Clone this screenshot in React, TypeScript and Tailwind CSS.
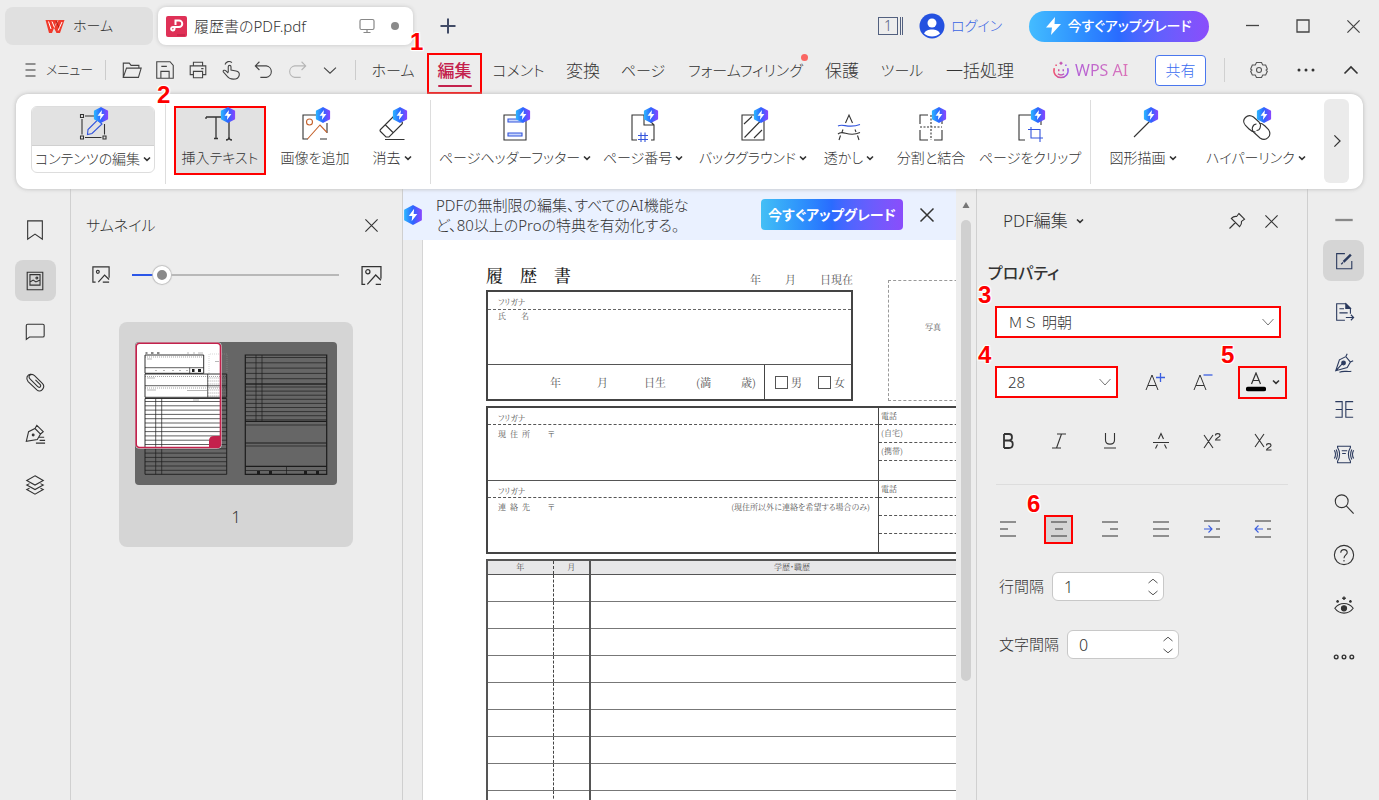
import { useState } from "react";
import type { ReactNode } from "react";
import clsx from "clsx";

type IconProps = { size?: number; box?: number; sw?: number; className?: string; children: ReactNode };

const Svg = ({ size = 24, box = 24, sw = 1, className, children }: IconProps) => (
  <svg width={size} height={size} viewBox={`0 0 ${box} ${box}`} fill="none" stroke="currentColor" strokeWidth={sw}
    className={clsx("shrink-0", className)} aria-hidden="true">
    {children}
  </svg>
);

// Premium hexagon with the lightning bolt
const Hex = ({ size = 16, className }: { size?: number; className?: string }) => (
  <svg width={size} height={size} viewBox="0 0 16 16" className={clsx("shrink-0", className)} aria-hidden="true">
    <path d="M8 0.8 14.4 4.2V11.8L8 15.2 1.6 11.8V4.2Z" fill="url(#pro)" stroke="url(#pro)" strokeWidth="1.4" strokeLinejoin="round" />
    <path d="M8.9 3 4.6 8.8H7.4L6.9 13 11.4 7.1H8.5Z" fill="#fff" />
  </svg>
);

const Caret = ({ size = 8 }: { size?: number }) => (
  <Svg size={size} box={8} sw={1.6}><path d="M1 2.5 4 5.3 7 2.5" /></Svg>
);

const Cross = ({ size = 16, sw = 1.2 }: { size?: number; sw?: number }) => (
  <Svg size={size} box={16} sw={sw}><path d="M1.5 1.5 14.5 14.5M14.5 1.5 1.5 14.5" /></Svg>
);

const Step = ({ n }: { n: number }) => (
  <span className="absolute -left-[19px] -top-[27px] z-20 font-['Liberation_Sans',sans-serif] text-2xl leading-7 font-bold text-[#fe0000] [text-shadow:1px_1px_1px_#fff,-1px_-1px_1px_#fff,1px_-1px_1px_#fff,-1px_1px_1px_#fff]">
    {n}
  </span>
);

const quickActions = [
  { label: "開く", icon: <path d="M2.5 20V4.5H9L11 7H19.5V10M2.5 20 6 10H22L19 20Z" /> },
  { label: "保存", icon: <path d="M3 21V3H17.5L21 7V21ZM7.5 21V13.5H16.5V21M8 8H14" /> },
  { label: "印刷", icon: <path d="M7 7.5V3.5H17V7.5M7 17H3.5V7.5H20.5V17H17M7 13.5H17V20.5H7ZM15.5 10.5H18" /> },
  { label: "ハンド", icon: <path d="M5.5 6A4.500 4.500 0 0 1 13 4M9 14.5V8.5C9 6.5 12 6.5 12 8.5V12L17.5 13C20 13.5 21.500 15 21 17.5 20.500 20.5 18.500 22 14.5 22 11 22 9 20.5 7.5 18.5L3.500 14C3 12.5 5 11.500 6.5 13L9 15.5" /> },
  { label: "元に戻す", icon: <path d="M7 3 2.5 7.5 7 12M2.5 7.5H14.5A6.3 6.3 0 0 1 14.5 20H8" /> },
  { label: "やり直し", dim: true, icon: <path d="M17 3 21.5 7.5 17 12M21.5 7.5H9.5A6.3 6.3 0 0 0 9.5 20H16" /> },
  { label: "その他", icon: <path d="M5.500 9.500 12 15.500 18.500 9.500" /> },
];

const menuTabs = [
  { label: "ホーム", w: "w-[68px]" },
  { label: "編集", w: "w-[55px]", kanji: true },
  { label: "コメント", w: "w-[73px]" },
  { label: "変換", w: "w-[56px]", kanji: true },
  { label: "ページ", w: "w-[64px]" },
  { label: "フォームフィリング", w: "w-[141px]", dot: true },
  { label: "保護", w: "w-[52px]", kanji: true },
  { label: "ツール", w: "w-[68px]" },
  { label: "一括処理", w: "w-[88px]", kanji: true },
];

type Tool = { label: string; w: string; caret?: boolean; free?: boolean; icon: ReactNode };

const insertTools: Tool[] = [
  { label: "画像を追加", w: "w-[98px]", icon: (
    <><path d="M19 3H3V27H8M27 11V21M20 27H27" /><g stroke="#c4622d"><circle cx="9.5" cy="10" r="3" /><path d="M7.5 27 20 13 27 20.5" /></g></>
  ) },
  { label: "消去", w: "w-[56px]", caret: true, icon: (
    <path d="M16.500 4.500 3.500 17.500Q2.500 18.500 3.500 19.500L9 25H12L25 12Q26 11 25 10L19.500 4.500Q18 3 16.500 4.500ZM8.500 13 16 20.500M8 27.500H27.500" />
  ) },
];

const pageTools: Tool[] = [
  { label: "ページヘッダーフッター", w: "w-[168px]", caret: true, icon: (
    <><path d="M4 3H26V28H4Z" /><path d="M8 7H22V10H8ZM8 21H22V24H8Z" stroke="#3355dd" fill="#c9d6fb" /></>
  ) },
  { label: "ページ番号", w: "w-[88px]", caret: true, icon: (
    <><path d="M9 28H4V3H16V13H26V28H23M16 3 26 13" /><path d="M10 23.500H20M10 27.500H20M13 20.500V30M17 20.500V30" stroke="#3355dd" /></>
  ) },
  { label: "バックグラウンド", w: "w-[132px]", caret: true, icon: (
    <path d="M4 3H26V28H4ZM6 12 14 4.500M6.500 25.500 24 7.500M16 26 24 18" />
  ) },
  { label: "透かし", w: "w-[60px]", caret: true, free: true, icon: (
    <><path d="M11.500 11 15 3 18.500 11M9 17.500 8 20M6.500 23.500 5 28M21 17.500 22 20M23.500 23.500 25 28M4 22C9 17 14 26 26 20.500" /><path d="M4 14C9 11 14 17 26 12.500" stroke="#3355dd" /></>
  ) },
  { label: "分割と結合", w: "w-[104px]", icon: (
    <><path d="M12 3H4V12M4 18V28H12M18 28H26V18M26 12V3H18" /><path d="M15 3V28M4 15H26" strokeDasharray="2 1.500" /></>
  ) },
  { label: "ページをクリップ", w: "w-[94px]", icon: (
    <><path d="M20 3H4V28H10M26 9V13" /><path d="M16 15V26H28M13 17.500H25V30" stroke="#3355dd" /></>
  ) },
];

const drawTools: Tool[] = [
  { label: "図形描画", w: "w-[104px]", caret: true, icon: <path d="M6 25 22 9" /> },
  { label: "ハイパーリンク", w: "w-[122px]", caret: true, icon: (
    <><path d="M14.500 20C12 20 10 19 8 17L4.500 13.500C-.500 7.500 6.500 1 12.500 5L18 10C21 13.500 19 18.500 15.500 18.500" /><path d="M18 11C20.500 11 22 12 24 14L27.500 17.500C31.500 24 25 30 19 26L13 20.500C9.500 17 12 12 15.500 12" /></>
  ) },
];

const leftRail = [
  { label: "しおり", icon: <path d="M4 2H20V22L12 16.500 4 22Z" /> },
  { label: "サムネイル", icon: <path d="M3.500 2.500H20.500V21.500H3.500ZM6.500 5H17.500V16.500H6.500ZM6.500 13 10 11 13 13 17.500 11M14 7.800A1 1 0 1 0 14.100 7.800" /> },
  { label: "コメント", icon: <path d="M2.500 20V5Q2.500 3.500 4 3.500H20.500Q22 3.500 22 5V16Q22 17.500 20.500 17.500H6Z" /> },
  { label: "添付", icon: <path d="M12.500 8.500 17.500 13.500C19.500 15.500 17 18 15 16L6.500 7.500C3.500 4.500 8 .500 11.500 4L20 12.500C24 16.500 18.500 23.500 14 19.500L4.500 10.500C1.500 7 3.500 2.500 7.500 2.200" /> },
  { label: "署名", icon: <><path d="M2.500 20 5 9.500 12 6 18 12 14.500 18 2.500 20ZM12 6 14 2.500 21 9.500 18 12M16 15.500H22M17 19H23M13 22H23" /><circle cx="10" cy="13" r="1" fill="currentColor" /></> },
  { label: "レイヤー", icon: <path d="M12 2 21 7 12 12 3 7ZM6 10.500 3 12 12 17 21 12 18 10.500M6 15.500 3 17 12 22 21 17 18 15.500" /> },
];

const railA = [
  { label: "編集", icon: <><path d="M13 4H4V20.500H20.500V12" /><path d="M11.500 13 19.500 5" strokeWidth="2.600" /><path d="M9 15.500 11 13.500" strokeWidth="1.500" /></> },
  { label: "変換", icon: <><path d="M13 21H4V3H14L19 8V14M7 8.500H12M7 13H16M14 18H22M19.500 15 22.500 18 19.500 21" /><path d="M14 3V8H19Z" fill="currentColor" /></> },
  { label: "署名", icon: <><path d="M3 20.500 7 8.500 14 5 19 11 15.500 17ZM14 5 15.500 2M19 11 22 9.500M3 20.500 10 13M7 22C12 20 16 22 20 21" /><circle cx="11.500" cy="12" r="2" fill="currentColor" /></> },
];
const railB = [
  { label: "比較", icon: <path d="M2.500 4H10V21H2.500M3 12.500H10M22 4H14V21H22M21.500 12.500H14" /> },
  { label: "圧縮", icon: <path d="M5 3.500H19V5C16 10 16 15 19 20V21.500H5V20C8 15 8 10 5 5ZM9.500 8.500H15.500M10 11.500H14M1.500 8Q4 12.500 1.500 17M3.500 7Q6 12.500 3.500 18M22.500 8Q20 12.500 22.500 17M20.500 7Q18 12.500 20.500 18" /> },
];
const railC = [
  { label: "検索", icon: <><circle cx="9.500" cy="9" r="7" /><path d="M14.500 14 22.500 22.500" /></> },
  { label: "ヘルプ", icon: <><circle cx="12" cy="12" r="10.500" /><path d="M8.500 9.500C8.500 5 15.500 5 15.500 9.500 15.500 12 12 12 12 15.500M12 17.500V19" /></> },
  { label: "目の保護", icon: <><path d="M2 14.500C7 7.500 17 7.500 22 14.500 17 21.500 7 21.500 2 14.500Z" /><circle cx="12" cy="14.500" r="2.800" fill="currentColor" /><path d="M12 1.500V5.500M10 3.500H14M3.500 7H6.500M5 5.500V8.500M17.500 7H20.500M19 5.500V8.500" strokeWidth="1.600" /></> },
  { label: "もっと", icon: <g strokeWidth="1.500"><circle cx="3.500" cy="12" r="2" /><circle cx="12" cy="12" r="2" /><circle cx="20.500" cy="12" r="2" /></g> },
];

const styleButtons = [
  { label: "太字", icon: <path d="M8 5V19M8 5H13C17 5 17 11.500 13 11.500H8M13 11.500C18 11.500 18 19 13 19H8" strokeWidth="1.800" /> },
  { label: "斜体", icon: <path d="M10 5H19M5 19H14M14.500 5 9.500 19" /> },
  { label: "下線", icon: <path d="M7.500 4V11C7.500 16.500 16.500 16.500 16.500 11V4M6 19H18" /> },
  { label: "取り消し線", icon: <path d="M9.500 10 12 4.500 14.500 10M4 13.500H20M8.500 15.500 6.500 19.500M15.500 15.500 17.500 19.500" /> },
  { label: "上付き", icon: <path d="M4 6 13 19M13 6 4 19M15.500 6.500C15.500 4 20 4 20 6.500 20 8.500 15.500 9 15.500 11H20.500" /> },
  { label: "下付き", icon: <path d="M4 5 13 18M13 5 4 18M15.500 16.500C15.500 14 20 14 20 16.500 20 18.500 15.500 19 15.500 21H20.500" /> },
];

const alignButtons = [
  { label: "左揃え", icon: <path d="M4 5H20M4 12H12M4 19H20" /> },
  { label: "中央揃え", icon: <path d="M4 5H20M8 12H16M4 19H20" /> },
  { label: "右揃え", icon: <path d="M4 5H20M12 12H20M4 19H20" /> },
  { label: "両端揃え", icon: <path d="M4 5H20M4 12H20M4 19H20" /> },
  { label: "インデント", icon: <><path d="M4 4H20M16 12H20M4 20H20" /><path d="M4 12H12M8.500 8.500 12 12 8.500 15.500" stroke="#3b5fe0" /></> },
  { label: "インデント解除", icon: <><path d="M4 4H20M16 12H20M4 20H20" /><path d="M12 12H4M7.500 8.500 4 12 7.500 15.500" stroke="#3b5fe0" /></> },
];

function ToolButton({ tool }: { tool: Tool }) {
  return (
    <button className={clsx("flex h-[68px] shrink-0 flex-col items-center whitespace-nowrap", tool.w)}>
      <span className="relative mt-1.5 mb-1.5">
        <Svg size={30} box={30} sw={1.1}>{tool.icon}</Svg>
        {!tool.free && <Hex className="absolute -top-[5px] left-[15px]" />}
      </span>
      <span className="flex items-center gap-[3px] text-sm leading-5">{tool.label}{tool.caret && <Caret />}</span>
    </button>
  );
}

function RailButton({ label, active, h = "h-[41px]", children }: { label: string; active?: boolean; h?: string; children: ReactNode }) {
  return (
    <button aria-label={label} className={clsx("flex w-[41px] items-center justify-center rounded-lg", h, active && "bg-[#d5d5d5]")}>
      <Svg size={22} sw={1.2}>{children}</Svg>
    </button>
  );
}

function TitleBar() {
  return (
    <header className="flex h-[46px] shrink-0 items-center pt-1.5 pl-[5px]">
      <button className="flex h-[38px] w-[148px] items-center justify-center gap-2 rounded-lg bg-[#e0e0e0] text-sm">
        <svg width="20" height="15" viewBox="0 0 20 15" fill="none" aria-hidden="true">
          <path d="M.5 1H13L10.500 5 9 9 7 14H4ZM13.500 1H19.500L15 14H11.500L9 9Z" fill="#f03a2c" />
          <path d="M3.500 2.500 6 10M7 2.500 9.500 8.500M17 3 13.200 11.500" stroke="#fff" />
          <path d="M11 2 14 8.500" stroke="#a81d16" />
        </svg>
        ホーム
      </button>
      <div className="ml-[5px] flex h-[38px] w-[255px] items-center rounded-lg bg-white px-2 shadow-[0_0_4px_#c4c4c4]">
        <svg width="21" height="21" viewBox="0 0 21 21" fill="none" aria-hidden="true">
          <rect width="21" height="21" rx="2" fill="#df3157" />
          <path d="M9.500 9V4.500H13A3.200 3.200 0 0 1 13 11H6.800A1.700 1.700 0 1 0 8.500 13V11" stroke="#fff" strokeWidth="2" />
          <path d="M11 19H19" stroke="#b71f43" />
        </svg>
        <span className="ml-[7px] text-[15px]">履歴書のPDF.pdf</span>
        <Svg size={16} box={16} sw={1.2} className="ml-auto text-[#888]"><path d="M2.500 1.500H13.500Q15 1.500 15 3V10Q15 11.500 13.500 11.500H2.500Q1 11.500 1 10V3Q1 1.500 2.500 1.500ZM8 11.500V14.500M4.500 14.500H11.500" /></Svg>
        <span className="mr-[6px] ml-4 size-2 rounded-full bg-[#8a8a8a]" />
      </div>
      <button aria-label="新しいタブ" className="ml-[27px] text-[#414b66]">
        <Svg size={16} box={16} sw={2}><path d="M8 .5V15.500M.5 8H15.500" /></Svg>
      </button>
      <button aria-label="ウィンドウ" className="mr-4 ml-auto flex h-[18px] text-[#52607f]">
        <span className="w-5 border border-current text-center text-sm leading-4">1</span>
        <span className="ml-[2px] w-[3px] border-x border-current" />
      </button>
      <button className="flex items-center gap-1.5 text-sm text-[#3a64e4]">
        <svg width="26" height="26" viewBox="0 0 26 26" aria-hidden="true">
          <circle cx="13" cy="13" r="12.500" fill="#2451e0" />
          <circle cx="13" cy="10" r="4.500" fill="#fff" />
          <path d="M5 20.500C7 15 19 15 21 20.500 17 24.500 9 24.500 5 20.500Z" fill="#fff" />
        </svg>
        <span className="w-[52px] text-left whitespace-nowrap">ログイン</span>
      </button>
      <button className="ml-[26px] flex h-[31px] w-[180px] items-center justify-center gap-1.5 rounded-full bg-linear-to-r from-[#44bcff] via-[#2a6bff] to-[#8a4dfb] text-sm font-medium text-white">
        <svg width="15" height="18" viewBox="0 0 15 18" aria-hidden="true"><path d="M9 0 0 10.500H6L5 18 15 7H8.500Z" fill="#fff" /></svg>
        今すぐアップグレード
      </button>
      <div className="flex w-[170px] items-center justify-between pr-[18px] pl-9 text-[#444]">
        <button aria-label="最小化"><Svg size={14} box={14} sw={1.3}><path d="M1 6.500H14" /></Svg></button>
        <button aria-label="最大化"><Svg size={14} box={14} sw={1.3}><path d="M1 1H13V13H1Z" /></Svg></button>
        <button aria-label="閉じる"><Cross size={15} sw={1.3} /></button>
      </div>
    </header>
  );
}

function MenuBar() {
  return (
    <nav className="flex h-12 shrink-0 items-center whitespace-nowrap">
      <button className="ml-6 flex w-[81px] items-center gap-2 text-[13px]">
        <Svg size={14} box={14} sw={1.2}><path d="M1.500 1H11.500M1.500 7H11.500M1.500 13H11.500" /></Svg>
        メニュー
      </button>
      <span className="mr-[9px] h-5 w-px bg-[#ccc]" />
      {quickActions.map((a) => (
        <button key={a.label} aria-label={a.label} className={clsx("flex w-[33px] justify-center", a.dim ? "text-[#b5b5b5]" : "text-[#444]")}>
          <Svg size={22} sw={1.2}>{a.icon}</Svg>
        </button>
      ))}
      <span className="mr-[3px] ml-[9px] h-5 w-px bg-[#ccc]" />
      {menuTabs.map((t) => {
        const active = t.label === "編集";
        return (
          <button key={t.label} className={clsx("relative flex h-[41px] shrink-0 items-center justify-center self-end", t.w, t.kanji ? "text-[17px]" : "text-[15px]",
            active && "border-2 border-[#fe0000] font-medium text-[#c4214c]")}>
            <span className="relative mb-1.5">
              {t.label}
              {t.dot && <span className="absolute -top-[5px] -right-[5px] size-[7px] rounded-full bg-[#fa6763]" />}
            </span>
            {active && <span className="absolute bottom-[5px] h-0.5 w-[34px] rounded bg-[#c4214c]" />}
            {active && <Step n={1} />}
          </button>
        );
      })}
      <button className="ml-7 flex items-center gap-[5px] text-base">
        <Svg size={18} sw={2}>
          <g stroke="url(#ai)"><path d="M3 9.500C1 17 6 22 12 22S23 17 21 9.500M9 11V13.500M15 11V13.500M8 17C10 19 14 19 16 17" /><path d="M12 1V5M10 3H14M4.500 5.500H6.500M17.500 5.500H19.500" /></g>
        </Svg>
        <span className="bg-linear-to-r from-[#b35fd6] to-[#dc74b8] bg-clip-text font-normal text-transparent">WPS AI</span>
      </button>
      <button className="ml-auto h-[31px] w-[51px] rounded border border-[#4a77ee] bg-white text-[15px] text-[#3a6cf0]">共有</button>
      <span className="ml-[18px] h-6 w-px bg-[#d0d0d0]" />
      <div className="flex w-[154px] items-center justify-between pr-5 pl-6">
        <button aria-label="設定" className="text-[#555]">
          <Svg size={20} sw={1.3}><path d="M9 3H15L16.500 6H20L22 11 20.500 12 22 13.500 20 18H16.500L15 21H9L7.500 18H4L2 13.500 3.500 12 2 11 4 6H7.500Z" /><circle cx="12" cy="12" r="3" /></Svg>
        </button>
        <button aria-label="その他"><Svg size={18} box={18}><g fill="currentColor" stroke="none"><circle cx="2" cy="9" r="1.500" /><circle cx="9" cy="9" r="1.500" /><circle cx="16" cy="9" r="1.500" /></g></Svg></button>
        <button aria-label="リボンを隠す"><Svg size={16} box={16} sw={1.6}><path d="M1.500 11.500 8 5 14.500 11.500" /></Svg></button>
      </div>
    </nav>
  );
}

function Ribbon() {
  return (
    <section className="z-10 mx-4 flex h-[95px] shrink-0 rounded-xl bg-white pr-3.5 pl-[15px] shadow-[0_0_4px_#b8b8b8]">
      <button className="mt-3 flex h-[67px] w-[124px] shrink-0 flex-col items-center overflow-hidden rounded-md border border-[#ddd] whitespace-nowrap">
        <span className="flex h-[39px] w-full items-center justify-center border-b border-[#d0d0d0] bg-[#e2e2e2]">
          <span className="relative">
            <Svg size={30} box={30} sw={1.1}>
              <path d="M2.500 3.500H5.500V6.500H2.500ZM2.500 25H5.500V28H2.500ZM25 25H28V28H25ZM4 8V23.500M7 26.500H23.500M26.500 13V23.500M7 5H17" />
              <path d="M9.500 23.500 10 18.500 19.500 9 24 13 14 22.500ZM9.500 23.500 14 22.500" stroke="#3355dd" />
            </Svg>
            <Hex className="absolute -top-1 left-[15px]" />
          </span>
        </span>
        <span className="flex h-[26px] items-center gap-[3px] text-sm">コンテンツの編集<Caret /></span>
      </button>
      <span className="mt-1.5 ml-[10px] h-[84px] w-px shrink-0 bg-[#ddd]" />
      <button className="relative mt-3 ml-2 flex h-[69px] w-[92px] shrink-0 flex-col items-center border-2 border-[#fe0000] bg-[#e2e2e2] whitespace-nowrap">
        <span className="relative mt-1 mb-1.5">
          <Svg size={30} box={30} sw={1.3}><path d="M1 5H17M1 5V7M11 5V26.500M9 26.500H13M17 5H24M24 10V25M21 28C22.500 28 24 27 24 25 24 27 25.500 28 27 28" /></Svg>
          <Hex className="absolute -top-[5px] left-[15px]" />
        </span>
        <span className="text-sm leading-5">挿入テキスト</span>
        <Step n={2} />
      </button>
      <div className="mt-3 flex">{insertTools.map((t) => <ToolButton key={t.label} tool={t} />)}</div>
      <span className="mt-1.5 ml-[10px] h-[84px] w-px shrink-0 bg-[#ddd]" />
      <div className="mt-3 flex">{pageTools.map((t) => <ToolButton key={t.label} tool={t} />)}</div>
      <span className="mt-1.5 ml-[13px] h-[84px] w-px shrink-0 bg-[#ddd]" />
      <div className="mt-3 flex">{drawTools.map((t) => <ToolButton key={t.label} tool={t} />)}</div>
      <button aria-label="次へ" className="mt-[5px] ml-auto flex h-[84px] w-[25px] shrink-0 items-center justify-center rounded-md bg-[#ebebeb]">
        <Svg size={14} box={16} sw={1.4}><path d="M5 1.500 11.500 8 5 14.500" /></Svg>
      </button>
    </section>
  );
}

// Small preview of the two page spread, with the visible area lit
function Thumbnail() {
  const rows = (x1: number, x2: number, from: number, step: number, n: number) =>
    Array.from({ length: n }, (_, i) => <path key={`${x1}-${from}-${i}`} d={`M${x1} ${from + i * step}H${x2}`} />);
  return (
    <svg width="202" height="143" viewBox="0 0 202 143" fill="none" aria-hidden="true">
      <rect width="202" height="143" rx="4" fill="#666" />
      <rect x="1" y="1" width="84.500" height="105" rx="3" fill="#fff" />
      <g stroke="#1c1c1c" strokeWidth=".7">
        <g strokeWidth=".9">
          <path d="M10 13H68.700V31.300H10ZM10 32H91.700V55.300H10ZM10 56.500H91.700V132.300H10Z" />
        </g>
        <path d="M10 25.700H68.700M54.700 25.700V31.300M10 43.700H91.700M72.700 32V55.300M20.700 56.500V132.300M26.700 56.500V132.300" />
        {rows(10, 91.7, 59.5, 4.3, 17)}
        <g strokeWidth=".4" strokeDasharray="1 1">
          <path d="M10 15H68M10 34.500H91M10 46H91" />
          <path d="M74 31V12H92V31" stroke="#999" />
          {rows(72.7, 91.7, 36, 3, 7)}
        </g>
        <path d="M57 28.500H59.500M63 28.500H66" strokeWidth="3" />
        <path d="M10.500 11H12.500M16 11H18.500M22 11H24.500" stroke="#888" strokeWidth="2" />
        <path d="M12 17H17M12 36H20M12 48H21M20 28.500H22M28 28.500H30M37 28.500H39M44 28.500H46M51 28.500H53M52 11H54M58 11H60M63 11H68M52 48.500H72M58 58H64M80 19.500H84" stroke="#999" />
        <g strokeWidth="1.200">
          <path d="M110.300 13H191.700V132.300H110.300ZM110.300 42H191.700M110.300 79.300H191.700M110.300 101H191.700M110.300 124.300H191.700" />
        </g>
        {rows(110.3, 191.7, 15.5, 5.3, 6)}
        {rows(110.3, 191.7, 45, 4.1, 9)}
        <path d="M121 13V79.300M127 13V79.300M110.300 83H191.700M110.300 104H191.700M110.300 128.500H191.700M151.500 124.300V132.300" />
        <path d="M122 130.500H125M134 130.500H137M169 130.500H172M181 130.500H184" strokeWidth="3" />
      </g>
      <path d="M74 105V99Q74 94 79 94H85V106Z" fill="#c4214c" />
      <rect x=".5" y=".5" width="86" height="106" rx="4" stroke="#eee" strokeWidth=".7" />
      <rect x="1.200" y="1.200" width="84.300" height="104.300" rx="3.500" stroke="#c4214c" strokeWidth="1.600" />
    </svg>
  );
}

function ThumbPanel() {
  const [zoom, setZoom] = useState(11);
  return (
    <aside className="flex w-[332px] shrink-0 flex-col border-r border-[#cfcfcf]">
      <div className="flex items-center justify-between pt-6 pr-[23px] pl-[15px]">
        <h2 className="text-[15px] leading-6">サムネイル</h2>
        <button aria-label="閉じる"><Cross size={15} /></button>
      </div>
      <div className="mt-[26px] flex h-6 items-center pr-5 pl-[21px]">
        <Svg size={18} box={20} sw={1.3}><path d="M4 18H1V1H19V13M12 18H19" /><circle cx="6.500" cy="6.500" r="1.600" /><path d="M7 18 14 10 19 15" /></Svg>
        <div className="relative mx-[22px] flex flex-1 items-center">
          <input type="range" aria-label="サムネイルのサイズ" value={zoom} onChange={(e) => setZoom(Number(e.target.value))}
            className="h-[18px] w-full appearance-none bg-[linear-gradient(to_right,#2b56e8_12%,#b8b8b8_12%)] bg-[length:100%_2px] bg-center bg-no-repeat [&::-webkit-slider-thumb]:size-[18px] [&::-webkit-slider-thumb]:appearance-none [&::-webkit-slider-thumb]:rounded-full [&::-webkit-slider-thumb]:border-4 [&::-webkit-slider-thumb]:border-white [&::-webkit-slider-thumb]:bg-[#8a8a8a] [&::-webkit-slider-thumb]:shadow-[0_0_1px_1px_#c0c0c0]" />
        </div>
        <Svg size={21} box={20} sw={1.2}><path d="M4 18.500H1V1.500H19V13M14 18.500H19" /><circle cx="6.500" cy="6.500" r="2" /><path d="M6 18.500 14 9.500 19 14.500" /></Svg>
      </div>
      <div className="mt-[35px] ml-12 flex w-[234px] flex-col items-center rounded-lg bg-[#d5d5d5] pt-5 pb-[18px]">
        <Thumbnail />
        <span className="mt-5 text-base leading-6">1</span>
      </div>
    </aside>
  );
}

const addresses = [
  { label: "現住所", phones: ["電話", "(自宅)", "(携帯)", ""] },
  { label: "連絡先", note: "(現住所以外に連絡を希望する場合のみ)", phones: ["電話", "", "", ""] },
];

function AddressBlock({ label, note, phones }: { label: string; note?: string; phones: string[] }) {
  return (
    <div className="flex h-[73px] border-b border-[#555] last:h-[72px] last:border-b-0">
      <div className="w-[391px] border-r border-[#444]">
        <p className="h-[17px] border-b border-dashed border-[#555] pt-1 pl-2.5 leading-3">フリガナ</p>
        <div className="flex justify-between pt-[3px] pr-2 pl-2.5 leading-3">
          <span className="flex gap-1">{label.split("").map((c) => <span key={c}>{c}</span>)}<span className="ml-3.5">〒</span></span>
          {note && <span>{note}</span>}
        </div>
      </div>
      <div className="flex-1">
        {phones.map((p, i) => (
          <p key={i} className="h-[18px] border-b border-dashed border-[#555] px-[2px] leading-4 first:h-[17px] last:border-b-0">{p}</p>
        ))}
      </div>
    </div>
  );
}

function Resume() {
  return (
    <article className="min-h-0 flex-1 overflow-hidden border-l border-[#d5d5d5] bg-white pt-[23px] pl-[63px] font-['Noto_Serif_CJK_JP','Noto_Sans_CJK_JP',serif] text-[8px] font-normal text-[#555]">
      <div className="w-[509px]">
        <div className="flex items-start">
          <div>
            <div className="flex h-[27px] w-[367px] items-end justify-between pb-[3px]">
              <h1 className="text-[17px] leading-6 font-medium text-[#222] [font-feature-settings:normal]">履　歴　書</h1>
              <p className="flex gap-6 text-[11px] leading-4"><span>年</span><span>月</span><span>日現在</span></p>
            </div>
            <div className="h-[111px] w-[367px] border-2 border-[#444]">
              <p className="h-[18px] border-b border-dashed border-[#666] pt-1 pl-2.5 leading-3">フリガナ</p>
              <p className="flex h-[55px] gap-[15px] border-b border-[#555] pl-2.5 leading-3"><span>氏</span><span>名</span></p>
              <div className="flex h-[34px] text-[11px] leading-[34px]">
                <div className="flex w-[277px] gap-9 border-r border-[#444] pl-[62px] whitespace-nowrap">
                  <span>年</span><span>月</span><span>日生</span>
                  <span className="-ml-1.5">(満</span><span className="-ml-1.5">歳)</span>
                </div>
                <div className="flex flex-1 items-center gap-4 pl-2.5">
                  {["男", "女"].map((s) => (
                    <label key={s} className="flex items-center gap-[3px]">
                      <input type="checkbox" className="size-[13px] appearance-none border border-[#555]" />{s}
                    </label>
                  ))}
                </div>
              </div>
            </div>
          </div>
          <div className="mt-[17px] ml-[35px] flex h-[121px] w-[90px] items-center justify-center border border-dashed border-[#999] pb-7">写真</div>
        </div>
        <div className="mt-[5px] h-[148px] border-2 border-[#444]">
          {addresses.map((a) => <AddressBlock key={a.label} {...a} />)}
        </div>
        <table className="mt-[5px] w-full table-fixed border-collapse border-2 border-[#555]">
          <thead className="bg-[#e7e7e8]">
            <tr className="h-[14px] leading-3">
              <th className="w-[66px] border-r border-b border-r-[#444] border-b-[#555] p-0 font-normal [border-right-style:dashed]">年</th>
              <th className="w-[37px] border-r-2 border-b border-r-[#555] border-b-[#555] p-0 font-normal">月</th>
              <th className="border-b border-[#555] p-0 font-normal">学歴・職歴</th>
            </tr>
          </thead>
          <tbody>
            {Array.from({ length: 12 }, (_, i) => (
              <tr key={i} className="h-[27px]">
                <td className="border-r border-b border-r-[#444] border-b-[#777] [border-right-style:dashed]" />
                <td className="border-r-2 border-b border-r-[#555] border-b-[#777]" />
                <td className="border-b border-[#777]" />
              </tr>
            ))}
          </tbody>
        </table>
      </div>
    </article>
  );
}

function Viewer() {
  return (
    <main className="flex min-w-0 flex-1">
      <div className="flex min-w-0 flex-1 flex-col">
        <div className="flex h-[51px] shrink-0 items-center bg-[#eaf1ff]">
          <Hex size={20} />
          <p className="ml-[13px] text-[15px] leading-5 whitespace-nowrap">
            PDFの無制限の編集、すべてのAI機能な<br />ど、80以上のProの特典を有効化する。
          </p>
          <button className="mr-4 ml-auto h-[31px] w-[142px] shrink-0 rounded bg-linear-to-r from-[#44bff5] via-[#2a6bff] to-[#8a4dfb] text-sm font-bold whitespace-nowrap text-white">
            今すぐアップグレード
          </button>
          <span className="mr-[21px] flex"><button aria-label="閉じる"><Cross sw={1.5} /></button></span>
        </div>
        <div className="ml-[19px] flex min-h-0 flex-1 flex-col"><Resume /></div>
      </div>
      <div className="flex w-[21px] shrink-0 flex-col items-center border-r border-[#d0d0d0] pt-3">
        <Svg size={8} box={8}><path d="M4 1 7.500 7H.5Z" fill="#777" stroke="none" /></Svg>
        <span className="mt-[11px] h-[461px] w-2.5 rounded-full bg-[#d0d0d0]" />
      </div>
    </main>
  );
}

function NumberBox({ id, label, initial }: { id: string; label: string; initial: number }) {
  const [value, setValue] = useState(initial);
  return (
    <div className="flex items-center gap-2 pl-[22px] text-[15px]">
      <label htmlFor={id}>{label}</label>
      <div className="flex h-[29px] w-[112px] items-center rounded-md border border-[#c8c8c8] bg-white pr-1">
        <input id={id} value={value} onChange={(e) => setValue(Number(e.target.value) || 0)} className="w-0 flex-1 bg-transparent pl-[11px] text-base outline-none" />
        <span className="flex flex-col gap-1.5 text-[#555]">
          <button aria-label={`${label}を増やす`} onClick={() => setValue(value + 1)}>
            <svg width="12" height="6" viewBox="0 0 12 6" fill="none" stroke="currentColor"><path d="M1.500 5 6 1.200 10.500 5" /></svg>
          </button>
          <button aria-label={`${label}を減らす`} onClick={() => setValue(value - 1)}>
            <svg width="12" height="6" viewBox="0 0 12 6" fill="none" stroke="currentColor"><path d="M1.500 1 6 4.800 10.500 1" /></svg>
          </button>
        </span>
      </div>
    </div>
  );
}

function SelectBox({ label, n, w, options }: { label: string; n: number; w: string; options: string[] }) {
  return (
    <div className={clsx("relative flex h-8 items-center border-2 border-[#fe0000] bg-white", w)}>
      <select aria-label={label} className="h-full w-full appearance-none bg-transparent pl-[11px] text-[15px] outline-none [font-feature-settings:normal]">
        {options.map((o) => <option key={o}>{o}</option>)}
      </select>
      <Svg size={12} box={12} className="pointer-events-none absolute right-[5px] text-[#777]"><path d="M.5 3 6 9 11.500 3" /></Svg>
      <Step n={n} />
    </div>
  );
}

function Properties() {
  return (
    <aside className="w-[331px] shrink-0 border-r border-[#cfcfcf]">
      <div className="flex items-center pt-5 pr-[28px] pl-[26px]">
        <button className="flex items-center gap-2 text-[17px] leading-6">PDF編集<Caret /></button>
        <button aria-label="固定" className="ml-auto"><Svg size={18} sw={1.5}><path d="M14.500 2 22 9.500 18 12.500C18.500 15.500 17.500 17.500 15.500 19.500L4.500 8.500C6.500 6.500 8.500 5.500 11.500 6ZM10 14 2 22" /></Svg></button>
        <button aria-label="閉じる" className="ml-[18px]"><Cross size={15} /></button>
      </div>
      <h2 className="mt-7 pl-[11px] text-base leading-6 font-medium">プロパティ</h2>
      <div className="mt-[21px] pl-[18px]">
        <SelectBox label="フォント" n={3} w="w-[286px]" options={["ＭＳ 明朝", "ＭＳ ゴシック"]} />
      </div>
      <div className="mt-[27px] flex h-[34px] items-center pl-[18px]">
        <SelectBox label="文字サイズ" n={4} w="w-[123px]" options={["28", "36", "48"]} />
        <button aria-label="文字を大きく" className="ml-[25px]">
          <Svg size={24}><path d="M3 20 9 5 15 20M5 15.500H13" /><path d="M13 7.500H22M17.500 3V12" stroke="#3b5fe0" strokeWidth="1.300" /></Svg>
        </button>
        <button aria-label="文字を小さく" className="ml-6">
          <Svg size={24}><path d="M3 20 9 5 15 20M5 15.500H13" /><path d="M12.500 5H21.500" stroke="#3b5fe0" strokeWidth="1.300" /></Svg>
        </button>
        <button aria-label="文字の色" className="relative ml-[23px] flex h-[33px] w-[49px] items-center justify-center gap-1.5 border-2 border-[#fe0000]">
          <Svg size={20} box={20} sw={1.2}><path d="M5.500 12 10 1 14.500 12M7 8.500H13" /><path d="M2 17H18" stroke="#000" strokeWidth="4.500" strokeLinecap="round" /></Svg>
          <Caret />
          <Step n={5} />
        </button>
      </div>
      <div className="mt-[27px] flex h-[30px] items-center pl-[5px]">
        {styleButtons.map((b) => (
          <button key={b.label} aria-label={b.label} className="flex w-[51px] justify-center"><Svg size={24} sw={1.1}>{b.icon}</Svg></button>
        ))}
      </div>
      <hr className="mt-[28px] mr-[19px] ml-[19px] border-[#ddd]" />
      <div className="mt-[28px] flex h-[32px] items-center pl-[5px]">
        {alignButtons.map((b) => {
          const active = b.label === "中央揃え";
          return (
            <span key={b.label} className="flex w-[51px] justify-center">
              <button aria-label={b.label} className={clsx("relative flex size-[29px] items-center justify-center", active && "border-2 border-[#fe0000] bg-[#d5d5d5]")}>
                <Svg size={24} sw={1.1}>{b.icon}</Svg>
                {active && <Step n={6} />}
              </button>
            </span>
          );
        })}
      </div>
      <div className="mt-[27px] flex flex-col gap-[29px]">
        <NumberBox id="line" label="行間隔" initial={1} />
        <NumberBox id="char" label="文字間隔" initial={0} />
      </div>
    </aside>
  );
}

export default function App() {
  return (
    <div className="flex h-screen flex-col overflow-hidden bg-[#ededed] font-['Noto_Sans','Noto_Sans_CJK_JP',sans-serif] font-light text-[#333] [font-feature-settings:'palt']">
      <svg className="absolute size-0" aria-hidden="true">
        <defs>
          <linearGradient id="pro"><stop stopColor="#2cb0ff" /><stop offset=".5" stopColor="#2c64ff" /><stop offset="1" stopColor="#8248ff" /></linearGradient>
          <linearGradient id="ai"><stop stopColor="#f0506e" /><stop offset="1" stopColor="#9b5cf0" /></linearGradient>
        </defs>
      </svg>
      <TitleBar />
      <MenuBar />
      <Ribbon />
      <div className="flex min-h-0 flex-1">
        <nav className="flex w-[71px] shrink-0 flex-col items-center gap-2.5 border-r border-[#d0d0d0] pt-5">
          {leftRail.map((r) => <RailButton key={r.label} label={r.label} active={r.label === "サムネイル"}>{r.icon}</RailButton>)}
        </nav>
        <ThumbPanel />
        <Viewer />
        <Properties />
        <nav className="flex w-[71px] shrink-0 flex-col items-center pt-2.5 text-[#2b3a5e]">
          <RailButton label="折りたたむ"><path d="M2.500 12H21.500" stroke="#888" strokeWidth="2.500" /></RailButton>
          <div className="flex flex-col gap-2.5">
            {railA.map((r) => <RailButton key={r.label} label={r.label} active={r.label === "編集"}>{r.icon}</RailButton>)}
          </div>
          <div className="mt-2 flex flex-col gap-2.5">
            {railB.map((r) => <RailButton key={r.label} label={r.label} h="h-[35px]">{r.icon}</RailButton>)}
          </div>
          <div className="mt-3 flex flex-col gap-2.5 text-[#333]">
            {railC.map((r) => <RailButton key={r.label} label={r.label}>{r.icon}</RailButton>)}
          </div>
        </nav>
      </div>
    </div>
  );
}
